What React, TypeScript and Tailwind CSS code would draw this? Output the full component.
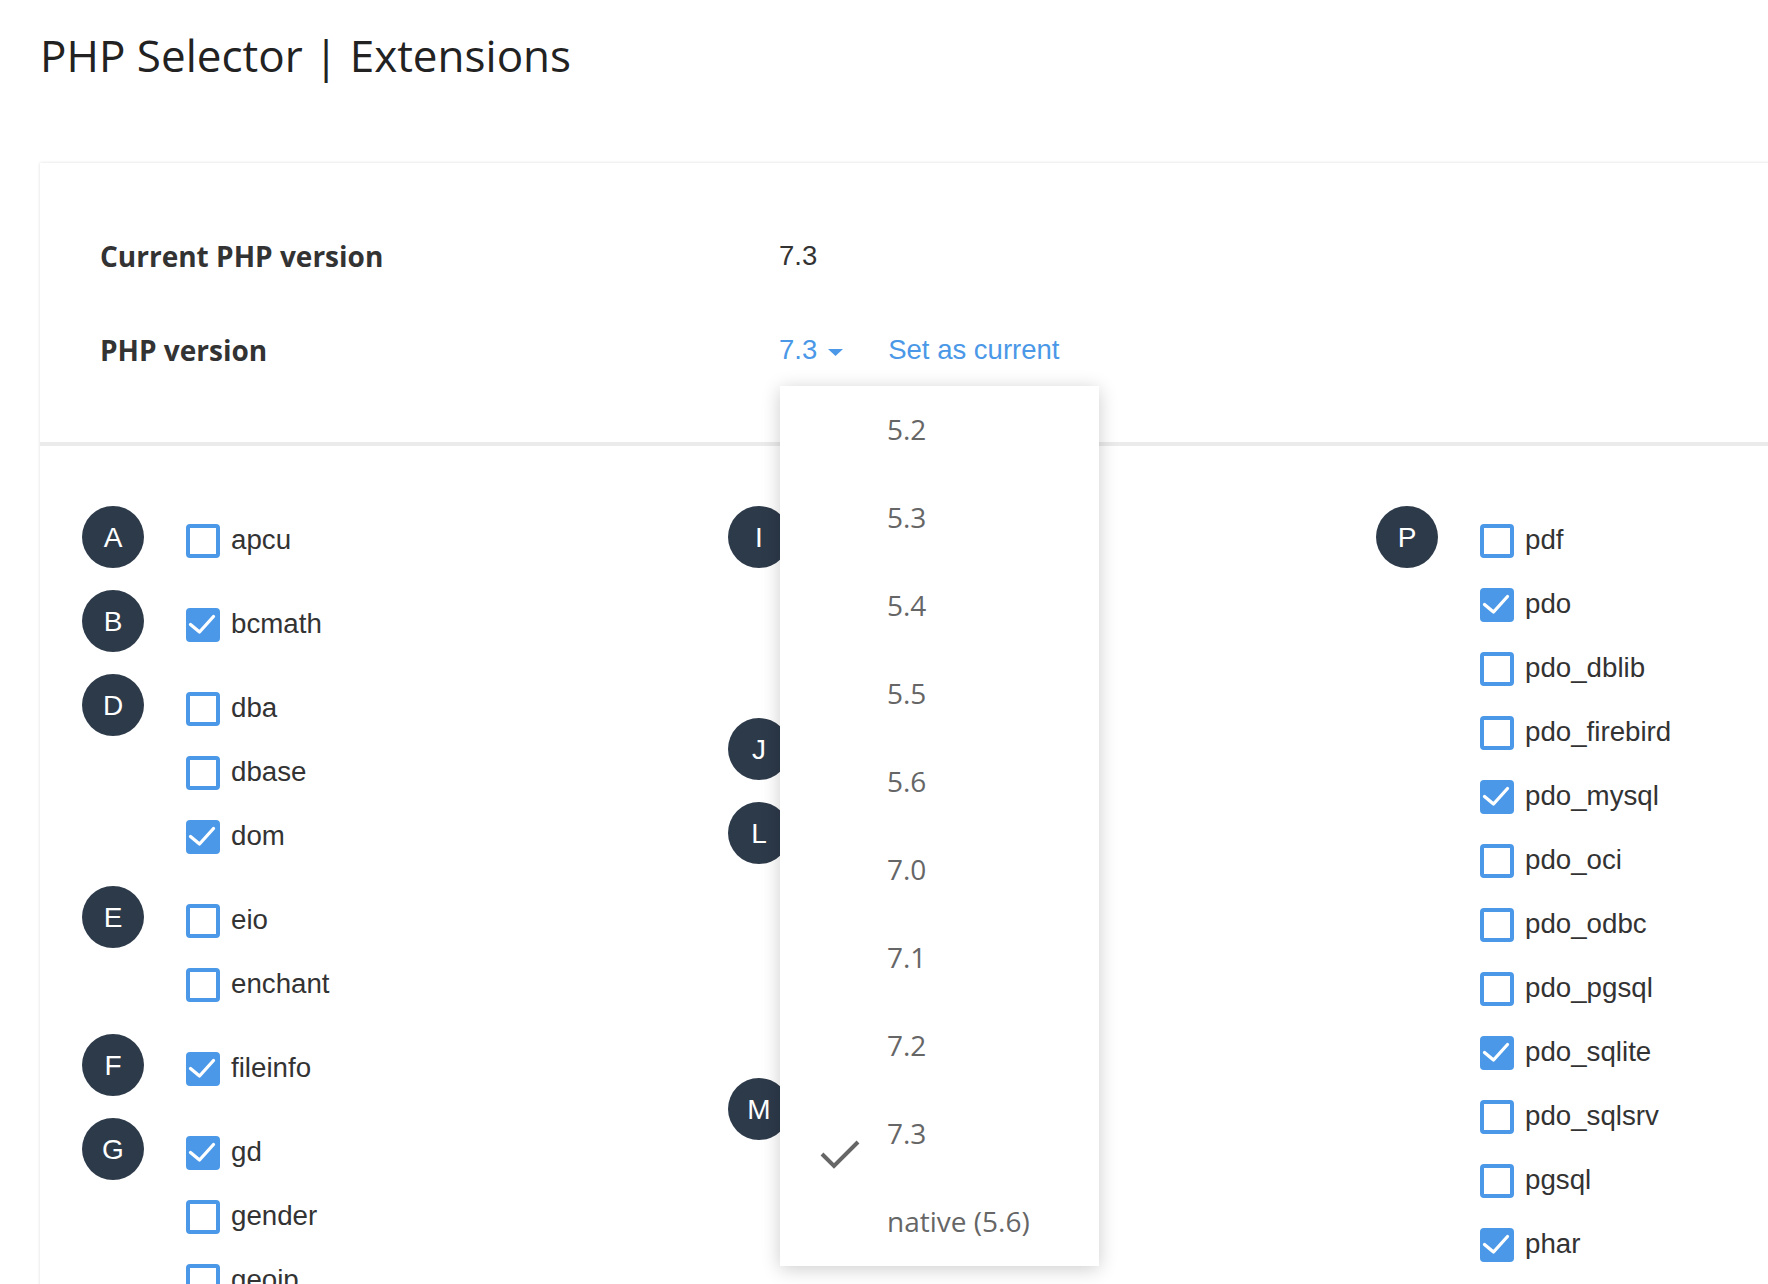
import React from "react";

type Item = [string, boolean];
type Group = { letter: string; items: Item[] };

const col1: Group[] = [
  { letter: "A", items: [["apcu", false]] },
  { letter: "B", items: [["bcmath", true]] },
  { letter: "D", items: [["dba", false], ["dbase", false], ["dom", true]] },
  { letter: "E", items: [["eio", false], ["enchant", false]] },
  { letter: "F", items: [["fileinfo", true]] },
  { letter: "G", items: [["gd", true], ["gender", false], ["geoip", false], ["gmagick", false], ["gmp", true]] },
];

const col2: Group[] = [
  { letter: "I", items: [["imap", false], ["inotify", false], ["intl", true]] },
  { letter: "J", items: [["json", true]] },
  { letter: "L", items: [["ldap", false], ["lzf", false], ["lz4", false], ["libxml", true]] },
  { letter: "M", items: [["mailparse", false], ["mbstring", true], ["memcache", false], ["memcached", false]] },
];

const col3: Group[] = [
  {
    letter: "P",
    items: [
      ["pdf", false],
      ["pdo", true],
      ["pdo_dblib", false],
      ["pdo_firebird", false],
      ["pdo_mysql", true],
      ["pdo_oci", false],
      ["pdo_odbc", false],
      ["pdo_pgsql", false],
      ["pdo_sqlite", true],
      ["pdo_sqlsrv", false],
      ["pgsql", false],
      ["phar", true],
      ["posix", true],
    ],
  },
];

const versions = ["5.2", "5.3", "5.4", "5.5", "5.6", "7.0", "7.1", "7.2", "7.3", "native (5.6)"];

function Box({ checked }: { checked: boolean }) {
  if (checked) {
    return (
      <span className="w-[34px] h-[34px] rounded-[4px] bg-[#4a98e7] flex items-center justify-center shrink-0">
        <svg width="34" height="34" viewBox="0 0 34 34">
          <path d="M4.5 16.5 L13.5 24 L27.5 8.5" stroke="white" strokeWidth="3.3" fill="none" strokeLinecap="round" strokeLinejoin="round" />
        </svg>
      </span>
    );
  }
  return <span className="w-[34px] h-[34px] rounded-[4px] border-4 border-[#4a98e7] bg-white shrink-0" />;
}

function Column({ groups }: { groups: Group[] }) {
  return (
    <div className="flex flex-col">
      {groups.map((g) => (
        <div key={g.letter} className="flex pb-[17px]">
          <div className="w-[62px] h-[62px] pt-[2px] rounded-full bg-[#2d3a4a] text-white flex items-center justify-center text-[28px] shrink-0">
            {g.letter}
          </div>
          <div className="pt-[3px] ml-[42px] flex flex-col">
            {g.items.map(([name, checked]) => (
              <div key={name} className="h-[64px] flex items-center">
                <Box checked={checked} />
                <span className="ml-[11px] -mt-[3px] text-[27.7px] text-[#333333] whitespace-nowrap">{name}</span>
              </div>
            ))}
          </div>
        </div>
      ))}
    </div>
  );
}

export default function App() {
  return (
    <div className="w-full h-screen overflow-hidden bg-white font-['Open_Sans',sans-serif]">
      <h1 className="ml-[40px] pt-[25px] text-[44px] leading-[60px] text-[#222222] font-normal whitespace-nowrap">
        PHP Selector | Extensions
      </h1>
      <div className="relative mt-[78px] ml-[40px] w-[1800px] bg-white shadow-[0_0_3px_rgba(0,0,0,0.14)]">
        <div className="pt-[46px] pb-[45px] pl-[60px]">
          <div className="h-[94px] flex items-center">
            <div className="w-[679px] font-bold text-[28px] text-[#333333]">Current PHP version</div>
            <div className="text-[#333333] text-[27.5px] font-['Liberation_Sans',Arial,sans-serif]">7.3</div>
          </div>
          <div className="h-[94px] flex items-center">
            <div className="w-[679px] font-bold text-[28px] text-[#333333]">PHP version</div>
            <div className="flex items-center text-[#4a98e7] text-[27.5px] font-['Liberation_Sans',Arial,sans-serif]">
              <span>7.3</span>
              <svg className="ml-[11px] mt-[4px]" width="15" height="7" viewBox="0 0 15 7">
                <path d="M0 0 L15 0 L7.5 7 Z" fill="#4a98e7" />
              </svg>
              <span className="ml-[45px]">Set as current</span>
            </div>
          </div>
        </div>
        <div className="h-[4px] bg-[#ebebeb]" />
        <div className="pt-[60px] pl-[42px] grid grid-cols-[646px_648px_1fr] font-['Liberation_Sans',Arial,sans-serif]">
          <Column groups={col1} />
          <Column groups={col2} />
          <Column groups={col3} />
        </div>

        <div className="absolute left-[740px] top-[223px] w-[319px] bg-white shadow-[0_3px_18px_rgba(0,0,0,0.2)] z-10">
          {versions.map((v) => (
            <div key={v} className="relative h-[88px] flex items-center pl-[107px] text-[28px] text-[#666666]">
              {v === "7.3" && (
                <svg className="absolute left-[40px] top-[49px]" width="40" height="30" viewBox="0 0 40 30">
                  <path d="M2 15 L14 27 L38 3" stroke="#666666" strokeWidth="4" fill="none" />
                </svg>
              )}
              <span className="-mt-[2px]">{v}</span>
            </div>
          ))}
        </div>
      </div>
    </div>
  );
}
